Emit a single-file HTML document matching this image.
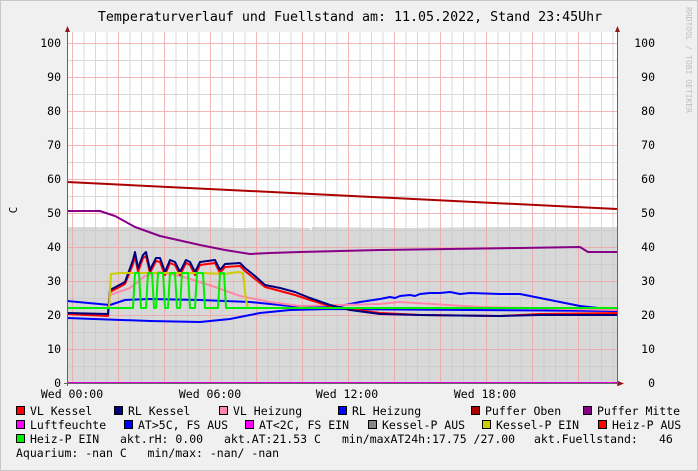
<!DOCTYPE html>
<html><head><meta charset="utf-8"><style>
html,body{margin:0;padding:0;}
body{width:698px;height:471px;background:#f0f0f0;position:relative;overflow:hidden;font-family:"DejaVu Sans Mono","Liberation Mono",monospace;}
.frame{position:absolute;left:0;top:0;width:696px;height:469px;border:1px solid #c8c8c8;}
.t{position:absolute;font-size:11.5px;color:#000;white-space:pre;line-height:12px;}
.b{position:absolute;width:9px;height:9px;border:1px solid #000;box-sizing:border-box;}
</style></head><body>
<div class="frame"></div>
<svg width="698" height="471" style="position:absolute;left:0;top:0">
<rect x="67" y="32" width="550" height="351" fill="#fff"/>
<path d="M67,227 L100,227 L101,228 L102,227 L200,227 L240,228 L280,227 L310,228 L311,232 L312,227 L400,228 L500,227 L617,227 L617,383 L67,383Z" fill="#d8d8d8"/>
<path stroke="#c8c8c8" stroke-opacity="0.7" fill="none" d="M84,32V383M95.5,32V383M107,32V383M130,32V383M141.5,32V383M153,32V383M176,32V383M187.5,32V383M199,32V383M222,32V383M233.5,32V383M245,32V383M268,32V383M279.5,32V383M291,32V383M314,32V383M325.5,32V383M337,32V383M360,32V383M371.5,32V383M383,32V383M406,32V383M417.5,32V383M429,32V383M452,32V383M463.5,32V383M475,32V383M498,32V383M509.5,32V383M521,32V383M544,32V383M555.5,32V383M567,32V383M590,32V383M601.5,32V383M613,32V383M67,366.5H617M67,332.5H617M67,298.5H617M67,264.5H617M67,230.5H617M67,196.5H617M67,162.5H617M67,128.5H617M67,94.5H617M67,60.5H617"/>
<path stroke="#f0a0a0" stroke-opacity="0.75" fill="none" d="M72.5,32V383M118.5,32V383M164.5,32V383M210.5,32V383M256.5,32V383M302.5,32V383M348.5,32V383M394.5,32V383M440.5,32V383M486.5,32V383M532.5,32V383M578.5,32V383M67,349.5H617M67,315.5H617M67,281.5H617M67,247.5H617M67,213.5H617M67,179.5H617M67,145.5H617M67,111.5H617M67,77.5H617M67,43.5H617"/>
<g fill="none" stroke-width="2" stroke-linejoin="round">
<polyline stroke="#aa0000" points="67,182 617,209"/>
<polyline stroke="#880088" points="67,211 100,211 115,216 135,227 160,236 200,245 225,250 250,254 270,253 300,252 380,250 450,249 520,248 580,247 588,252 617,252"/>
<polyline stroke="#0000ff" points="67,301 110,305 125,300 150,299 200,300 250,302 300,307 340,306 360,302 380,299 390,297 395,298 400,296 410,295 415,296 420,294 430,293 440,293 450,292 460,294 470,293 500,294 520,294 540,298 580,306 617,310"/>
<polyline stroke="#0000ff" points="67,318 150,321 200,322 230,319 260,313 290,310 330,309 617,311"/>
<polyline stroke="#ff88aa" points="108,314 110,295 130,288 145,276 160,272 180,276 200,282 215,287 240,296 270,302 300,306 380,304 400,302 480,307 617,310"/>
<polyline stroke="#ff0000" points="67,314 108,316 110,292 125,284 133,264 135,256 138,272 143,258 146,256 150,273 156,261 160,262 165,275 170,263 175,265 180,275 186,263 190,265 195,275 200,265 215,263 220,273 225,267 240,266 245,271 255,279 265,287 280,291 295,295 310,300 330,306 350,309 380,313 420,315 500,316 540,314 617,313"/>
<polyline stroke="#000080" points="67,313 108,314 110,290 125,282 133,260 135,252 138,268 143,255 146,252 150,270 156,258 160,258 165,272 170,260 175,262 180,272 186,260 190,262 195,272 200,262 215,260 220,270 225,264 240,263 245,268 255,276 265,285 280,288 295,292 310,298 330,305 350,310 380,314 420,315 500,316 540,315 617,315"/>
<polyline stroke="#cccc00" points="67,308 109,308 111,274 120,273 200,273 225,274 238,272 243,273 246,300 248,308 617,308"/>
<polyline stroke="#00ee00" points="67,308 133,308 135,273 139,273 141,308 146,308 148,273 152,273 154,308 156,308 158,273 163,273 165,308 168,308 170,273 175,273 177,308 180,308 182,273 188,273 190,308 195,308 197,273 203,273 205,308 218,308 220,273 224,273 226,308 617,308"/>
<line x1="67" y1="383" x2="621" y2="383" stroke="#dd00dd" stroke-width="2"/>
</g>
<line x1="67.5" y1="32" x2="67.5" y2="386" stroke="#666"/>
<line x1="617.5" y1="32" x2="617.5" y2="386" stroke="#666"/>
<line x1="64" y1="383.5" x2="622" y2="383.5" stroke="#666"/>
<path d="M65,32 L67.5,26 L70,32Z" fill="#8b1a1a"/>
<path d="M615,32 L617.5,26 L620,32Z" fill="#8b1a1a"/>
<path d="M618,381 L624,383.5 L618,386Z" fill="#8b1a1a"/>
<text x="17" y="210" font-size="11" font-family="DejaVu Sans Mono,monospace" transform="rotate(-90 17 210)" text-anchor="middle">C</text>
<text x="686" y="60" font-size="8" fill="#c0c0c0" font-family="DejaVu Sans Mono,monospace" transform="rotate(90 686 60)" text-anchor="middle">RRDTOOL / TOBI OETIKER</text>
<g font-size="11.5" font-family="DejaVu Sans Mono,monospace" fill="#000">
<text x="350" y="21" font-size="13.3" text-anchor="middle">Temperaturverlauf und Fuellstand am: 11.05.2022, Stand 23:45Uhr</text>
<g text-anchor="end">
<text x="61" y="387">0</text><text x="61" y="353">10</text><text x="61" y="319">20</text><text x="61" y="285">30</text><text x="61" y="251">40</text><text x="61" y="217">50</text><text x="61" y="183">60</text><text x="61" y="149">70</text><text x="61" y="115">80</text><text x="61" y="81">90</text><text x="61" y="47">100</text>
<text x="655" y="387">0</text><text x="655" y="353">10</text><text x="655" y="319">20</text><text x="655" y="285">30</text><text x="655" y="251">40</text><text x="655" y="217">50</text><text x="655" y="183">60</text><text x="655" y="149">70</text><text x="655" y="115">80</text><text x="655" y="81">90</text><text x="655" y="47">100</text>
</g>
<text x="72" y="398" text-anchor="middle">Wed 00:00</text>
<text x="210" y="398" text-anchor="middle">Wed 06:00</text>
<text x="347" y="398" text-anchor="middle">Wed 12:00</text>
<text x="485" y="398" text-anchor="middle">Wed 18:00</text>
</g>
</svg>
<div class="b" style="left:16px;top:406px;background:#ff0000"></div><div class="t" style="left:30px;top:405px">VL Kessel</div>
<div class="b" style="left:114px;top:406px;background:#000080"></div><div class="t" style="left:128px;top:405px">RL Kessel</div>
<div class="b" style="left:219px;top:406px;background:#ff88aa"></div><div class="t" style="left:233px;top:405px">VL Heizung</div>
<div class="b" style="left:338px;top:406px;background:#0000ff"></div><div class="t" style="left:352px;top:405px">RL Heizung</div>
<div class="b" style="left:471px;top:406px;background:#aa0000"></div><div class="t" style="left:485px;top:405px">Puffer Oben</div>
<div class="b" style="left:583px;top:406px;background:#880088"></div><div class="t" style="left:597px;top:405px">Puffer Mitte</div>
<div class="b" style="left:16px;top:420px;background:#ff00ff"></div><div class="t" style="left:30px;top:419px">Luftfeuchte</div>
<div class="b" style="left:124px;top:420px;background:#0000ff"></div><div class="t" style="left:138px;top:419px">AT&gt;5C, FS AUS</div>
<div class="b" style="left:245px;top:420px;background:#ff00ff"></div><div class="t" style="left:259px;top:419px">AT&lt;2C, FS EIN</div>
<div class="b" style="left:368px;top:420px;background:#888888"></div><div class="t" style="left:382px;top:419px">Kessel-P AUS</div>
<div class="b" style="left:482px;top:420px;background:#cccc00"></div><div class="t" style="left:496px;top:419px">Kessel-P EIN</div>
<div class="b" style="left:598px;top:420px;background:#ff0000"></div><div class="t" style="left:612px;top:419px">Heiz-P AUS</div>
<div class="b" style="left:16px;top:434px;background:#00ee00"></div><div class="t" style="left:30px;top:433px">Heiz-P EIN</div>
<div class="t" style="left:120px;top:433px">akt.rH: 0.00</div>
<div class="t" style="left:224px;top:433px">akt.AT:21.53 C</div>
<div class="t" style="left:342px;top:433px">min/maxAT24h:17.75 /27.00</div>
<div class="t" style="left:534px;top:433px">akt.Fuellstand:</div>
<div class="t" style="left:659px;top:433px">46</div>
<div class="t" style="left:16px;top:447px">Aquarium: -nan C   min/max: -nan/ -nan</div>
</body></html>
